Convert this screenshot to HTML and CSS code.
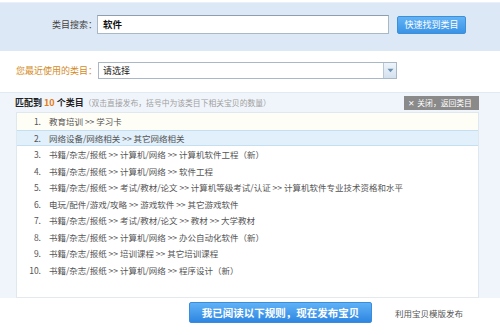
FILE: index.html
```html
<!DOCTYPE html>
<html lang="zh">
<head>
<meta charset="utf-8">
<link rel="stylesheet" href="styles.css">
</head>
<body>
<div class="page">
  <div class="search-band">
    <div class="field-row">
      <span class="label">类目搜索：</span>
      <div class="text-input">软件</div>
      <button class="find-btn">快速找到类目</button>
    </div>
  </div>
  <div class="recent">
    <span class="label recent-label">您最近使用的类目：</span>
    <div class="select">
      <span class="select-text">请选择</span>
      <span class="select-arrow"><svg width="7" height="5" viewBox="0 0 7 5"><path d="M0.5 0.8 L6.5 0.8 L3.5 4.2 Z" fill="#6a8fb3"/></svg></span>
    </div>
  </div>
  <div class="result">
    <div class="result-head">
      <div class="result-title"><b>匹配到 <em>10</em> 个类目</b><span class="hint">（双击直接发布，括号中为该类目下相关宝贝的数量）</span></div>
      <button class="close-btn"><span class="x">✕</span> 关闭，返回类目</button>
    </div>
    <div class="list-wrap">
      <ol class="list">
        <li class="row row-soft"><span class="num">1.</span><span class="path">教育培训 &gt;&gt; 学习卡</span></li>
        <li class="row row-active"><span class="num">2.</span><span class="path">网络设备/网络相关 &gt;&gt; 其它网络相关</span></li>
        <li class="row"><span class="num">3.</span><span class="path">书籍/杂志/报纸 &gt;&gt; 计算机/网络 &gt;&gt; 计算机软件工程（新）</span></li>
        <li class="row"><span class="num">4.</span><span class="path">书籍/杂志/报纸 &gt;&gt; 计算机/网络 &gt;&gt; 软件工程</span></li>
        <li class="row"><span class="num">5.</span><span class="path">书籍/杂志/报纸 &gt;&gt; 考试/教材/论文 &gt;&gt; 计算机等级考试/认证 &gt;&gt; 计算机软件专业技术资格和水平</span></li>
        <li class="row"><span class="num">6.</span><span class="path">电玩/配件/游戏/攻略 &gt;&gt; 游戏软件 &gt;&gt; 其它游戏软件</span></li>
        <li class="row"><span class="num">7.</span><span class="path">书籍/杂志/报纸 &gt;&gt; 考试/教材/论文 &gt;&gt; 教材 &gt;&gt; 大学教材</span></li>
        <li class="row"><span class="num">8.</span><span class="path">书籍/杂志/报纸 &gt;&gt; 计算机/网络 &gt;&gt; 办公自动化软件（新）</span></li>
        <li class="row"><span class="num">9.</span><span class="path">书籍/杂志/报纸 &gt;&gt; 培训课程 &gt;&gt; 其它培训课程</span></li>
        <li class="row"><span class="num">10.</span><span class="path">书籍/杂志/报纸 &gt;&gt; 计算机/网络 &gt;&gt; 程序设计（新）</span></li>
      </ol>
    </div>
  </div>
  <div class="actions">
    <button class="publish-btn">我已阅读以下规则，现在发布宝贝</button>
    <a class="template-link">利用宝贝模版发布</a>
  </div>
</div>
</body>
</html>
```

FILE: styles.css
```css
* { box-sizing: border-box; }
html, body { margin: 0; padding: 0; background: #ffffff; }
body {
  font-family: "Noto Sans CJK SC", "DejaVu Sans", sans-serif;
  font-size: 9px;
  color: #333;
  width: 500px;
  height: 335px;
  overflow: hidden;
}
.page { width: 500px; }

.search-band {
  margin-top: 2px;
  height: 49px;
  background: #dde8f6;
  border-top: 1px solid #e9f0f9;
  padding-top: 12px;
}
.field-row {
  display: flex;
  align-items: center;
}
.label {
  width: 97px;
  text-align: right;
  font-size: 9px;
  color: #444;
  flex: none;
}
.text-input {
  width: 292px;
  height: 19px;
  background: #fff;
  border: 1px solid #a9b7c6;
  border-top-color: #8e9daf;
  font-size: 9.5px;
  color: #111;
  line-height: 17px;
  padding-left: 5px;
  font-weight: bold;
}
.find-btn {
  margin-left: 8px;
  width: 69px;
  height: 18px;
  border: 1px solid #3e8fd8;
  border-radius: 2px;
  background: linear-gradient(#62b3f5, #3a93e6);
  color: #fff;
  font-family: inherit;
  font-size: 9px;
  padding: 0;
  line-height: 16px;
}

.recent {
  height: 41px;
  display: flex;
  align-items: center;
  padding-bottom: 2px;
}
.recent-label { color: #d48a1e; }
.select {
  margin-left: 1px;
  width: 299px;
  height: 17px;
  border: 1px solid #a9b7c6;
  display: flex;
  align-items: stretch;
  background: #fff;
}
.select-text {
  flex: 1;
  font-size: 9px;
  line-height: 15px;
  padding-left: 4px;
  color: #222;
}
.select-arrow {
  width: 13px;
  background: linear-gradient(#eef4fa, #d3e1ee);
  border-left: 1px solid #b8c8d8;
  display: flex;
  align-items: center;
  justify-content: center;
}

.result {
  background: #f0f5fb;
  border-top: 1px solid #e1e9f2;
}
.result-head {
  height: 19px;
  display: flex;
  align-items: center;
  justify-content: space-between;
  padding-left: 15px;
  padding-right: 21px;
}
.result-title { white-space: nowrap; }
.result-title b { color: #222; font-weight: bold; font-size: 9px; }
.result-title em { font-style: normal; color: #e57b12; }
.hint { color: #a0a0a0; font-size: 7.8px; }
.close-btn {
  height: 14px;
  width: 75px;
  border: none;
  background: #8a8a8a;
  color: #fff;
  font-family: inherit;
  font-size: 7.8px;
  padding: 0 4px;
  line-height: 14px;
  text-align: left;
  white-space: nowrap;
  overflow: hidden;
}
.close-btn .x { font-weight: bold; margin-right: 1px; }

.list-wrap {
  margin-left: 16px;
  width: 463px;
  height: 186px;
  background: #fff;
  border: 1px solid #dfe7ef;
  border-bottom-color: #e4e9ee;
}
.list {
  list-style: none;
  margin: 0;
  padding: 0;
}
.row {
  height: 16.5px;
  display: flex;
  align-items: center;
  color: #555;
  font-size: 8.5px;
  white-space: nowrap;
}
.row-soft { background: #fffef6; }
.row-active {
  background: #e1f0fb;
  border-top: 1px solid #c4dff0;
  border-bottom: 1px solid #c4dff0;
}
.num {
  width: 24px;
  text-align: right;
  flex: none;
}
.path { margin-left: 8px; }

.actions {
  display: flex;
  align-items: center;
  padding-left: 189px;
  padding-top: 4px;
}
.publish-btn {
  width: 183px;
  height: 21px;
  border: 1px solid #3c8cdc;
  border-radius: 2px;
  background: linear-gradient(#5fb2f6, #2f86e2);
  color: #fff;
  font-family: inherit;
  font-size: 10.5px;
  font-weight: bold;
  padding: 0;
}
.template-link {
  margin-left: 23px;
  margin-top: 1px;
  color: #555;
  font-size: 8.5px;
}
```
